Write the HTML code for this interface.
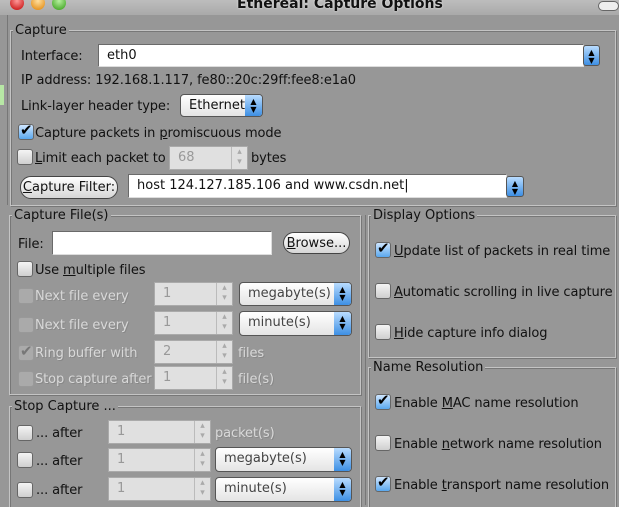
<!DOCTYPE html><html><head><style>
*{box-sizing:border-box;margin:0;padding:0}
html{overflow:hidden;width:619px;height:507px}
body{width:619px;height:507px;overflow:hidden;background:#979797;font-family:"DejaVu Sans","Liberation Sans",sans-serif;font-size:13px;color:#111;position:relative}
.a{position:absolute;white-space:nowrap}
.t{position:absolute;white-space:nowrap;line-height:16px;padding-top:2px;letter-spacing:-0.1px}
.fr{position:absolute;border:1px solid #c4c4c4;box-shadow:inset 1px 1px 0 #777,1px 1px 0 #777}
.lg{position:absolute;background:#979797;padding:0 2px;line-height:15px;top:-8px;left:2px}
.in{position:absolute;background:#fff;border:1px solid #6a6a6a;border-right-color:#ddd;border-bottom-color:#ddd;padding-left:8px;line-height:22px}
.sp{position:absolute;background:#e0e0e0;border:1px solid #aaa;color:#999;padding-left:8px;line-height:22px}
.sp:after{content:"▴\A▾";white-space:pre;position:absolute;right:0;top:0;width:15px;height:100%;border-left:1px solid #bbb;font-size:9px;line-height:10px;text-align:center;color:#aaa}
.cb{position:absolute;width:16px;height:16px;border:1px solid #666;border-radius:3px;background:linear-gradient(#f4f4f4,#cfcfcf)}
.cb.on{background:linear-gradient(#cfe6ff,#5aa8ee)}
.cb.on:after{content:"✔";position:absolute;left:1px;top:-4px;font-size:15px;color:#000}
.cb.dis{border-color:#999;background:#aaa}
.cb.dis.on{background:#aaa}
.cb.dis.on:after{color:#777}
.cmb{position:absolute;border:1px solid #555;border-radius:4px;background:linear-gradient(#fff,#e4e4e4);padding-left:8px;line-height:22px}
.cmb b,.sb{position:absolute;right:0;top:0;bottom:0;width:17px;background:linear-gradient(#b9dcff,#3d8fe4);border-radius:0 3px 3px 0;font-size:8px;line-height:8px;text-align:center;padding-top:3px;color:#000;font-weight:normal}
.sb{position:absolute;border:1px solid #555;border-radius:3px}
.btn{position:absolute;border:1px solid #444;border-radius:11px;background:linear-gradient(#fff,#d6d6d6);text-align:center;line-height:22px}
.g{color:#d9d9d9;text-shadow:1px 1px 0 #888}
u{text-decoration:underline}
</style></head><body>
<div class="a" style="left:0;top:0;width:619px;height:15px;background:linear-gradient(#bdbdbd,#a9a9a9)"></div>
<div class="a" style="left:10px;top:-4px;width:14px;height:14px;border-radius:7px;background:radial-gradient(circle at 50% 35%,#ff9a9a,#c00000)"></div>
<div class="a" style="left:31px;top:-4px;width:14px;height:14px;border-radius:7px;background:radial-gradient(circle at 50% 35%,#ffe0a0,#e08000)"></div>
<div class="a" style="left:52px;top:-4px;width:14px;height:14px;border-radius:7px;background:radial-gradient(circle at 50% 35%,#b8f0a0,#2f9a10)"></div>
<div class="a" style="left:237px;top:-4px;font-weight:bold;font-size:14px;text-shadow:0 0 2px #eee">Ethereal: Capture Options</div>
<div class="a" style="left:598px;top:1px;width:21px;height:10px;border:1px solid #666;border-radius:5px;background:#eee"></div>
<div class="a" style="left:7px;top:15px;width:1px;height:190px;background:#777"></div>
<div class="a" style="left:0;top:85px;width:4px;height:20px;background:#b7e7a5"></div>

<div class="fr" style="left:10px;top:30px;width:606px;height:176px"><div class="lg">Capture</div></div>
<div class="t" style="left:21px;top:47px">Interface:</div>
<div class="in" style="left:98px;top:44px;width:486px;height:23px">eth0</div>
<div class="sb" style="left:583px;top:45px;width:17px;height:21px">▲<br>▼</div>
<div class="t" style="left:21px;top:71px">IP address: 192.168.1.117, fe80::20c:29ff:fee8:e1a0</div>
<div class="t" style="left:21px;top:97px">Link-layer header type:</div>
<div class="cmb" style="left:180px;top:94px;width:83px;height:23px">Ethernet<b>▲<br>▼</b></div>
<div class="cb on" style="left:18px;top:124px"></div><div class="t" style="left:35px;top:124px">Capture packets in <u>p</u>romiscuous mode</div>
<div class="cb" style="left:17px;top:149px"></div><div class="t" style="left:35px;top:149px"><u>L</u>imit each packet to</div>
<div class="sp" style="left:169px;top:146px;width:79px;height:24px">68</div>
<div class="t" style="left:251px;top:149px">bytes</div>
<div class="btn" style="left:20px;top:176px;width:98px;height:23px"><u>C</u>apture Filter:</div>
<div class="in" style="left:128px;top:174px;width:379px;height:24px">host 124.127.185.106 and www.csdn.net|</div>
<div class="sb" style="left:506px;top:176px;width:18px;height:21px">▲<br>▼</div>

<div class="fr" style="left:9px;top:215px;width:352px;height:180px"><div class="lg">Capture File(s)</div></div>
<div class="t" style="left:18px;top:235px">File:</div>
<div class="in" style="left:52px;top:231px;width:220px;height:24px"></div>
<div class="btn" style="left:283px;top:232px;width:67px;height:22px"><u>B</u>rowse...</div>
<div class="cb" style="left:17px;top:261px"></div><div class="t" style="left:35px;top:261px">Use <u>m</u>ultiple files</div>
<div class="cb dis" style="left:18px;top:288px"></div><div class="t g" style="left:35px;top:287px">Next file every</div>
<div class="sp" style="left:154px;top:282px;width:79px;height:24px">1</div>
<div class="cmb" style="left:239px;top:282px;width:113px;height:24px;color:#444">megabyte(s)<b>▲<br>▼</b></div>
<div class="cb dis" style="left:18px;top:317px"></div><div class="t g" style="left:35px;top:316px">Next file every</div>
<div class="sp" style="left:154px;top:311px;width:79px;height:24px">1</div>
<div class="cmb" style="left:239px;top:311px;width:113px;height:25px;color:#444">minute(s)<b>▲<br>▼</b></div>
<div class="cb dis on" style="left:18px;top:345px"></div><div class="t g" style="left:35px;top:344px">Ring buffer with</div>
<div class="sp" style="left:154px;top:340px;width:79px;height:24px">2</div>
<div class="t g" style="left:238px;top:344px">files</div>
<div class="cb dis" style="left:18px;top:371px"></div><div class="t g" style="left:35px;top:370px">Stop capture after</div>
<div class="sp" style="left:154px;top:366px;width:79px;height:24px">1</div>
<div class="t g" style="left:238px;top:370px">file(s)</div>

<div class="fr" style="left:9px;top:406px;width:352px;height:110px"><div class="lg">Stop Capture ...</div></div>
<div class="cb" style="left:17px;top:425px"></div><div class="t" style="left:36px;top:424px">... after</div>
<div class="sp" style="left:108px;top:420px;width:103px;height:24px">1</div>
<div class="t g" style="left:215px;top:424px">packet(s)</div>
<div class="cb" style="left:17px;top:452px"></div><div class="t" style="left:36px;top:452px">... after</div>
<div class="sp" style="left:108px;top:448px;width:103px;height:24px">1</div>
<div class="cmb" style="left:215px;top:447px;width:137px;height:25px;color:#444">megabyte(s)<b>▲<br>▼</b></div>
<div class="cb" style="left:17px;top:482px"></div><div class="t" style="left:36px;top:481px">... after</div>
<div class="sp" style="left:108px;top:477px;width:103px;height:24px">1</div>
<div class="cmb" style="left:215px;top:477px;width:137px;height:25px;color:#444">minute(s)<b>▲<br>▼</b></div>

<div class="a" style="left:365px;top:215px;width:1px;height:290px;background:#777"></div>
<div class="fr" style="left:368px;top:215px;width:248px;height:143px"><div class="lg">Display Options</div></div>
<div class="cb on" style="left:375px;top:242px"></div><div class="t" style="left:394px;top:242px"><u>U</u>pdate list of packets in real time</div>
<div class="cb" style="left:375px;top:283px"></div><div class="t" style="left:394px;top:283px"><u>A</u>utomatic scrolling in live capture</div>
<div class="cb" style="left:375px;top:324px"></div><div class="t" style="left:394px;top:324px"><u>H</u>ide capture info dialog</div>
<div class="fr" style="left:368px;top:367px;width:248px;height:150px"><div class="lg">Name Resolution</div></div>
<div class="cb on" style="left:375px;top:394px"></div><div class="t" style="left:394px;top:394px">Enable <u>M</u>AC name resolution</div>
<div class="cb" style="left:375px;top:435px"></div><div class="t" style="left:394px;top:435px">Enable <u>n</u>etwork name resolution</div>
<div class="cb on" style="left:375px;top:476px"></div><div class="t" style="left:394px;top:476px">Enable <u>t</u>ransport name resolution</div>
</body></html>
